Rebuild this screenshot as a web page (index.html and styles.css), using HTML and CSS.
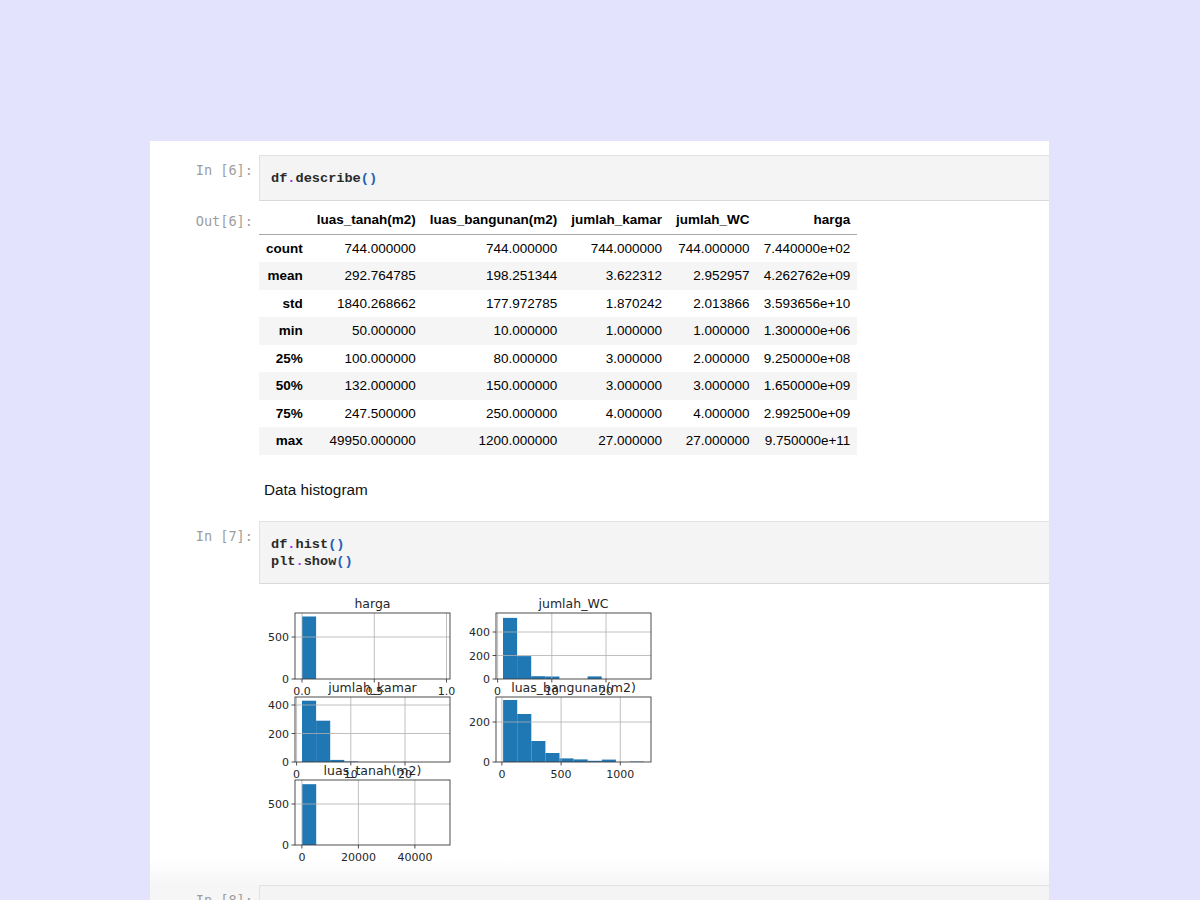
FILE: index.html
```html
<!DOCTYPE html>
<html>
<head>
<meta charset="utf-8">
<link rel="stylesheet" href="styles.css">
</head>
<body>
<div class="notebook">
  <div class="cell">
    <div class="prompt">In [6]:</div>
    <div class="input">df<span class="op">.</span>describe<span class="par">()</span></div>
  </div>
  <div class="cell output">
    <div class="prompt">Out[6]:</div>
    <table class="df">
      <thead>
        <tr><th></th><th>luas_tanah(m2)</th><th>luas_bangunan(m2)</th><th>jumlah_kamar</th><th>jumlah_WC</th><th class="last">harga</th></tr>
      </thead>
      <tbody>
        <tr><th>count</th><td>744.000000</td><td>744.000000</td><td>744.000000</td><td>744.000000</td><td class="last">7.440000e+02</td></tr>
        <tr><th>mean</th><td>292.764785</td><td>198.251344</td><td>3.622312</td><td>2.952957</td><td class="last">4.262762e+09</td></tr>
        <tr><th>std</th><td>1840.268662</td><td>177.972785</td><td>1.870242</td><td>2.013866</td><td class="last">3.593656e+10</td></tr>
        <tr><th>min</th><td>50.000000</td><td>10.000000</td><td>1.000000</td><td>1.000000</td><td class="last">1.300000e+06</td></tr>
        <tr><th>25%</th><td>100.000000</td><td>80.000000</td><td>3.000000</td><td>2.000000</td><td class="last">9.250000e+08</td></tr>
        <tr><th>50%</th><td>132.000000</td><td>150.000000</td><td>3.000000</td><td>3.000000</td><td class="last">1.650000e+09</td></tr>
        <tr><th>75%</th><td>247.500000</td><td>250.000000</td><td>4.000000</td><td>4.000000</td><td class="last">2.992500e+09</td></tr>
        <tr><th>max</th><td>49950.000000</td><td>1200.000000</td><td>27.000000</td><td>27.000000</td><td class="last">9.750000e+11</td></tr>
      </tbody>
    </table>
  </div>
  <div class="cell md">
    <div class="prompt empty"></div>
    <div class="md-text">Data histogram</div>
  </div>
  <div class="cell">
    <div class="prompt">In [7]:</div>
    <div class="input">df<span class="op">.</span>hist<span class="par">()</span>
plt<span class="op">.</span>show<span class="par">()</span></div>
  </div>
  <div class="cell output plots">
    <div class="prompt empty"></div>
    <svg class="hist" width="400" height="280" viewBox="259 590 400 280" xmlns="http://www.w3.org/2000/svg">
      <!-- harga -->
      <g class="ax">
        <rect class="bar" x="302" y="616.5" width="14.1" height="62.5"/>
        <g class="grid">
          <line x1="302" y1="613" x2="302" y2="679"/>
          <line x1="374.3" y1="613" x2="374.3" y2="679"/>
          <line x1="446.5" y1="613" x2="446.5" y2="679"/>
          <line x1="295" y1="637" x2="450" y2="637"/>
        </g>
        <rect class="frame" x="295" y="613" width="155" height="66"/>
        <g class="tick">
          <line x1="291.5" y1="637" x2="295" y2="637"/>
          <line x1="291.5" y1="679" x2="295" y2="679"/>
          <line x1="302" y1="679" x2="302" y2="682.5"/>
          <line x1="374.3" y1="679" x2="374.3" y2="682.5"/>
          <line x1="446.5" y1="679" x2="446.5" y2="682.5"/>
        </g>
        <text class="yl" x="289" y="641">500</text>
        <text class="yl" x="289" y="683">0</text>
        <text class="xl" x="302" y="694.5">0.0</text>
        <text class="xl" x="374.3" y="694.5">0.5</text>
        <text class="xl" x="446.5" y="694.5">1.0</text>
        <text class="title" x="372.5" y="607.5">harga</text>
      </g>
      <!-- jumlah_WC -->
      <g class="ax">
        <rect class="bar" x="503" y="617.9" width="14.1" height="61.1"/>
        <rect class="bar" x="517.1" y="656.1" width="14.1" height="22.9"/>
        <rect class="bar" x="531.2" y="676.2" width="14.1" height="2.8"/>
        <rect class="bar" x="545.3" y="676.5" width="14.1" height="2.5"/>
        <rect class="bar" x="587.6" y="676.4" width="14.1" height="2.6"/>
        <g class="grid">
          <line x1="497.6" y1="613" x2="497.6" y2="679"/>
          <line x1="551.8" y1="613" x2="551.8" y2="679"/>
          <line x1="606" y1="613" x2="606" y2="679"/>
          <line x1="496" y1="655.5" x2="651" y2="655.5"/>
          <line x1="496" y1="632" x2="651" y2="632"/>
        </g>
        <rect class="frame" x="496" y="613" width="155" height="66"/>
        <g class="tick">
          <line x1="492.5" y1="632" x2="496" y2="632"/>
          <line x1="492.5" y1="655.5" x2="496" y2="655.5"/>
          <line x1="492.5" y1="679" x2="496" y2="679"/>
          <line x1="497.6" y1="679" x2="497.6" y2="682.5"/>
          <line x1="551.8" y1="679" x2="551.8" y2="682.5"/>
          <line x1="606" y1="679" x2="606" y2="682.5"/>
        </g>
        <text class="yl" x="490" y="636">400</text>
        <text class="yl" x="490" y="659.5">200</text>
        <text class="yl" x="490" y="683">0</text>
        <text class="xl" x="497.6" y="694.5">0</text>
        <text class="xl" x="551.8" y="694.5">10</text>
        <text class="xl" x="606" y="694.5">20</text>
        <text class="title" x="573.5" y="607.5">jumlah_WC</text>
      </g>
      <!-- jumlah_kamar -->
      <g class="ax">
        <rect class="bar" x="302" y="700.7" width="14.1" height="61.3"/>
        <rect class="bar" x="316.1" y="720.7" width="14.1" height="41.3"/>
        <rect class="bar" x="330.2" y="759.9" width="14.1" height="2.1"/>
        <rect class="bar" x="344.3" y="761.5" width="14.1" height="0.5"/>
        <g class="grid">
          <line x1="296.6" y1="697" x2="296.6" y2="762"/>
          <line x1="350.8" y1="697" x2="350.8" y2="762"/>
          <line x1="405" y1="697" x2="405" y2="762"/>
          <line x1="295" y1="733.5" x2="450" y2="733.5"/>
          <line x1="295" y1="705" x2="450" y2="705"/>
        </g>
        <rect class="frame" x="295" y="697" width="155" height="65"/>
        <g class="tick">
          <line x1="291.5" y1="705" x2="295" y2="705"/>
          <line x1="291.5" y1="733.5" x2="295" y2="733.5"/>
          <line x1="291.5" y1="762" x2="295" y2="762"/>
          <line x1="296.6" y1="762" x2="296.6" y2="765.5"/>
          <line x1="350.8" y1="762" x2="350.8" y2="765.5"/>
          <line x1="405" y1="762" x2="405" y2="765.5"/>
        </g>
        <text class="yl" x="289" y="709">400</text>
        <text class="yl" x="289" y="737.5">200</text>
        <text class="yl" x="289" y="766">0</text>
        <text class="xl" x="296.6" y="777.5">0</text>
        <text class="xl" x="350.8" y="777.5">10</text>
        <text class="xl" x="405" y="777.5">20</text>
        <text class="title" x="372.5" y="692">jumlah_kamar</text>
      </g>
      <!-- luas_bangunan -->
      <g class="ax">
        <rect class="bar" x="503.1" y="700" width="14.1" height="62"/>
        <rect class="bar" x="517.2" y="714" width="14.1" height="48"/>
        <rect class="bar" x="531.3" y="741" width="14.1" height="21"/>
        <rect class="bar" x="545.4" y="753" width="14.1" height="9"/>
        <rect class="bar" x="559.5" y="758.4" width="14.1" height="3.6"/>
        <rect class="bar" x="573.6" y="759.4" width="14.1" height="2.6"/>
        <rect class="bar" x="587.7" y="760.8" width="14.1" height="1.2"/>
        <rect class="bar" x="601.8" y="759.6" width="14.1" height="2.4"/>
        <rect class="bar" x="630" y="761.6" width="14.1" height="0.4"/>
        <g class="grid">
          <line x1="501.9" y1="697" x2="501.9" y2="762"/>
          <line x1="561.1" y1="697" x2="561.1" y2="762"/>
          <line x1="620.3" y1="697" x2="620.3" y2="762"/>
          <line x1="496" y1="722" x2="651" y2="722"/>
        </g>
        <rect class="frame" x="496" y="697" width="155" height="65"/>
        <g class="tick">
          <line x1="492.5" y1="722" x2="496" y2="722"/>
          <line x1="492.5" y1="762" x2="496" y2="762"/>
          <line x1="501.9" y1="762" x2="501.9" y2="765.5"/>
          <line x1="561.1" y1="762" x2="561.1" y2="765.5"/>
          <line x1="620.3" y1="762" x2="620.3" y2="765.5"/>
        </g>
        <text class="yl" x="490" y="726">200</text>
        <text class="yl" x="490" y="766">0</text>
        <text class="xl" x="501.9" y="777.5">0</text>
        <text class="xl" x="561.1" y="777.5">500</text>
        <text class="xl" x="620.3" y="777.5">1000</text>
        <text class="title" x="573.5" y="692">luas_bangunan(m2)</text>
      </g>
      <!-- luas_tanah -->
      <g class="ax">
        <rect class="bar" x="302.1" y="784.2" width="14.1" height="60.8"/>
        <g class="grid">
          <line x1="301.9" y1="780" x2="301.9" y2="845"/>
          <line x1="358.4" y1="780" x2="358.4" y2="845"/>
          <line x1="414.9" y1="780" x2="414.9" y2="845"/>
          <line x1="295" y1="804" x2="450" y2="804"/>
        </g>
        <rect class="frame" x="295" y="780" width="155" height="65"/>
        <g class="tick">
          <line x1="291.5" y1="804" x2="295" y2="804"/>
          <line x1="291.5" y1="845" x2="295" y2="845"/>
          <line x1="301.9" y1="845" x2="301.9" y2="848.5"/>
          <line x1="358.4" y1="845" x2="358.4" y2="848.5"/>
          <line x1="414.9" y1="845" x2="414.9" y2="848.5"/>
        </g>
        <text class="yl" x="289" y="808">500</text>
        <text class="yl" x="289" y="849">0</text>
        <text class="xl" x="301.9" y="860.5">0</text>
        <text class="xl" x="358.4" y="860.5">20000</text>
        <text class="xl" x="414.9" y="860.5">40000</text>
        <text class="title" x="372.5" y="775">luas_tanah(m2)</text>
      </g>
    </svg>
  </div>
  <div class="cell last-cell">
    <div class="prompt">In [8]:</div>
    <div class="input"> </div>
  </div>
</div>
</body>
</html>
```
FILE: styles.css
```css
html, body {
  margin: 0;
  padding: 0;
}
body {
  background: #e3e3fd;
  height: 900px;
  overflow: hidden;
  font-family: "Liberation Sans", Arial, sans-serif;
  color: #000;
}
.notebook {
  margin: 141px 0 0 150px;
  width: 899px;
  min-height: 800px;
  background: #fff;
  padding-top: 14px;
}
.cell {
  display: flex;
  align-items: flex-start;
}
.prompt {
  flex: none;
  width: 103px;
  padding-right: 6px;
  padding-top: 7px;
  text-align: right;
  font-family: "DejaVu Sans Mono", "Liberation Mono", monospace;
  font-size: 13.6px;
  line-height: 17px;
  color: #9e9e9e;
  white-space: pre;
}
.input {
  flex: 1;
  min-height: 17px;
  background: #f4f4f4;
  border: 1px solid #e2e2e2;
  border-bottom-color: #d9d9d9;
  border-right: none;
  padding: 14px 11px 13px;
  font-family: "Liberation Mono", "DejaVu Sans Mono", monospace;
  font-weight: bold;
  font-size: 13.6px;
  line-height: 17px;
  color: #2a2a2a;
  white-space: pre;
}
.op { color: #aa22ff; }
.par { color: #1f5db5; }

.output {
  padding-top: 5px;
}
.df {
  border-collapse: collapse;
  font-size: 13.5px;
  line-height: 17.5px;
}
.df th, .df td {
  padding: 5px 7px;
  text-align: right;
  white-space: nowrap;
  font-weight: normal;
}
.df th {
  font-weight: bold;
}
.df thead th {
  border-bottom: 1px solid #a8a8a8;
}
.df tbody tr:nth-child(even) {
  background: #f5f5f5;
}
.df .last {
  width: 86px;
}

.md {
  padding: 25px 0 21px;
}
.md .prompt { padding-top: 0; }
.md-text {
  padding-left: 5px;
  font-size: 15.3px;
  line-height: 20px;
  color: #111;
}

.plots {
  padding-top: 6px;
  padding-bottom: 15px;
  background: linear-gradient(to bottom, #fff 0, #fff 275px, #f6f6f6 100%);
}
.last-cell {
  background: #f6f6f6;
}
.hist {
  display: block;
  font-family: "DejaVu Sans", sans-serif;
}
.hist .bar { fill: #1f77b4; }
.hist .grid line { stroke: #b0b0b0; stroke-width: 0.8; }
.hist .frame { fill: none; stroke: #3a3a3a; stroke-width: 0.9; }
.hist .tick line { stroke: #3a3a3a; stroke-width: 0.9; }
.hist text { fill: #262626; }
.hist .yl { font-size: 11px; text-anchor: end; }
.hist .xl { font-size: 11px; text-anchor: middle; }
.hist .title { font-size: 12.5px; text-anchor: middle; }
```
